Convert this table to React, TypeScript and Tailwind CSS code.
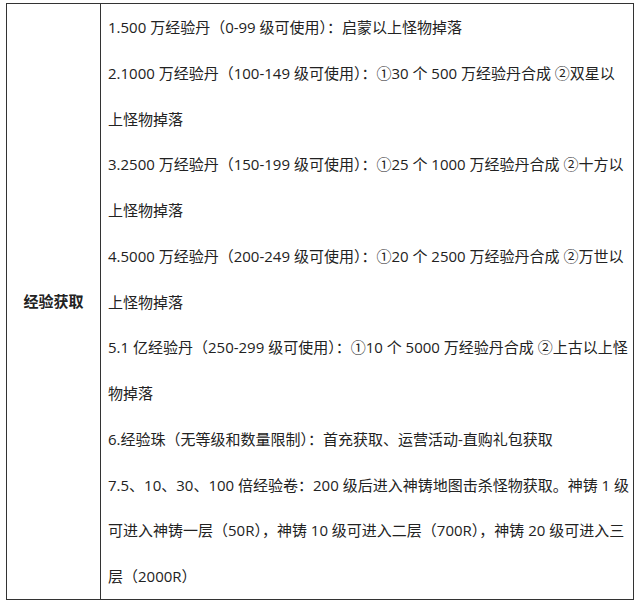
import React from "react";

const lines: string[] = [
  "1.500 万经验丹（0-99 级可使用）：启蒙以上怪物掉落",
  "2.1000 万经验丹（100-149 级可使用）：①30 个 500 万经验丹合成 ②双星以",
  "上怪物掉落",
  "3.2500 万经验丹（150-199 级可使用）：①25 个 1000 万经验丹合成 ②十方以",
  "上怪物掉落",
  "4.5000 万经验丹（200-249 级可使用）：①20 个 2500 万经验丹合成 ②万世以",
  "上怪物掉落",
  "5.1 亿经验丹（250-299 级可使用）：①10 个 5000 万经验丹合成 ②上古以上怪",
  "物掉落",
  "6.经验珠（无等级和数量限制）：首充获取、运营活动-直购礼包获取",
  "7.5、10、30、100 倍经验卷：200 级后进入神铸地图击杀怪物获取。神铸 1 级",
  "可进入神铸一层（50R），神铸 10 级可进入二层（700R），神铸 20 级可进入三",
  "层（2000R）",
];

export default function App() {
  return (
    <div
      className="w-[640px] h-[602px] bg-white pt-[3px] pl-[6px] text-[#222]"
      style={{ fontFamily: '"Open Sans", "Noto Sans CJK SC", sans-serif' }}
    >
      <div className="flex w-[628px] h-[597px] border-[1.5px] border-[#333]">
        <div className="w-[94px] shrink-0 border-r border-[#333] flex items-center justify-center">
          <span className="text-[15px] font-bold">经验获取</span>
        </div>
        <div className="flex-1 pl-[7px] pt-[1px] text-[15px] leading-[45.75px] whitespace-nowrap overflow-hidden">
          {lines.map((l, i) => (
            <div key={i}>{l}</div>
          ))}
        </div>
      </div>
    </div>
  );
}
